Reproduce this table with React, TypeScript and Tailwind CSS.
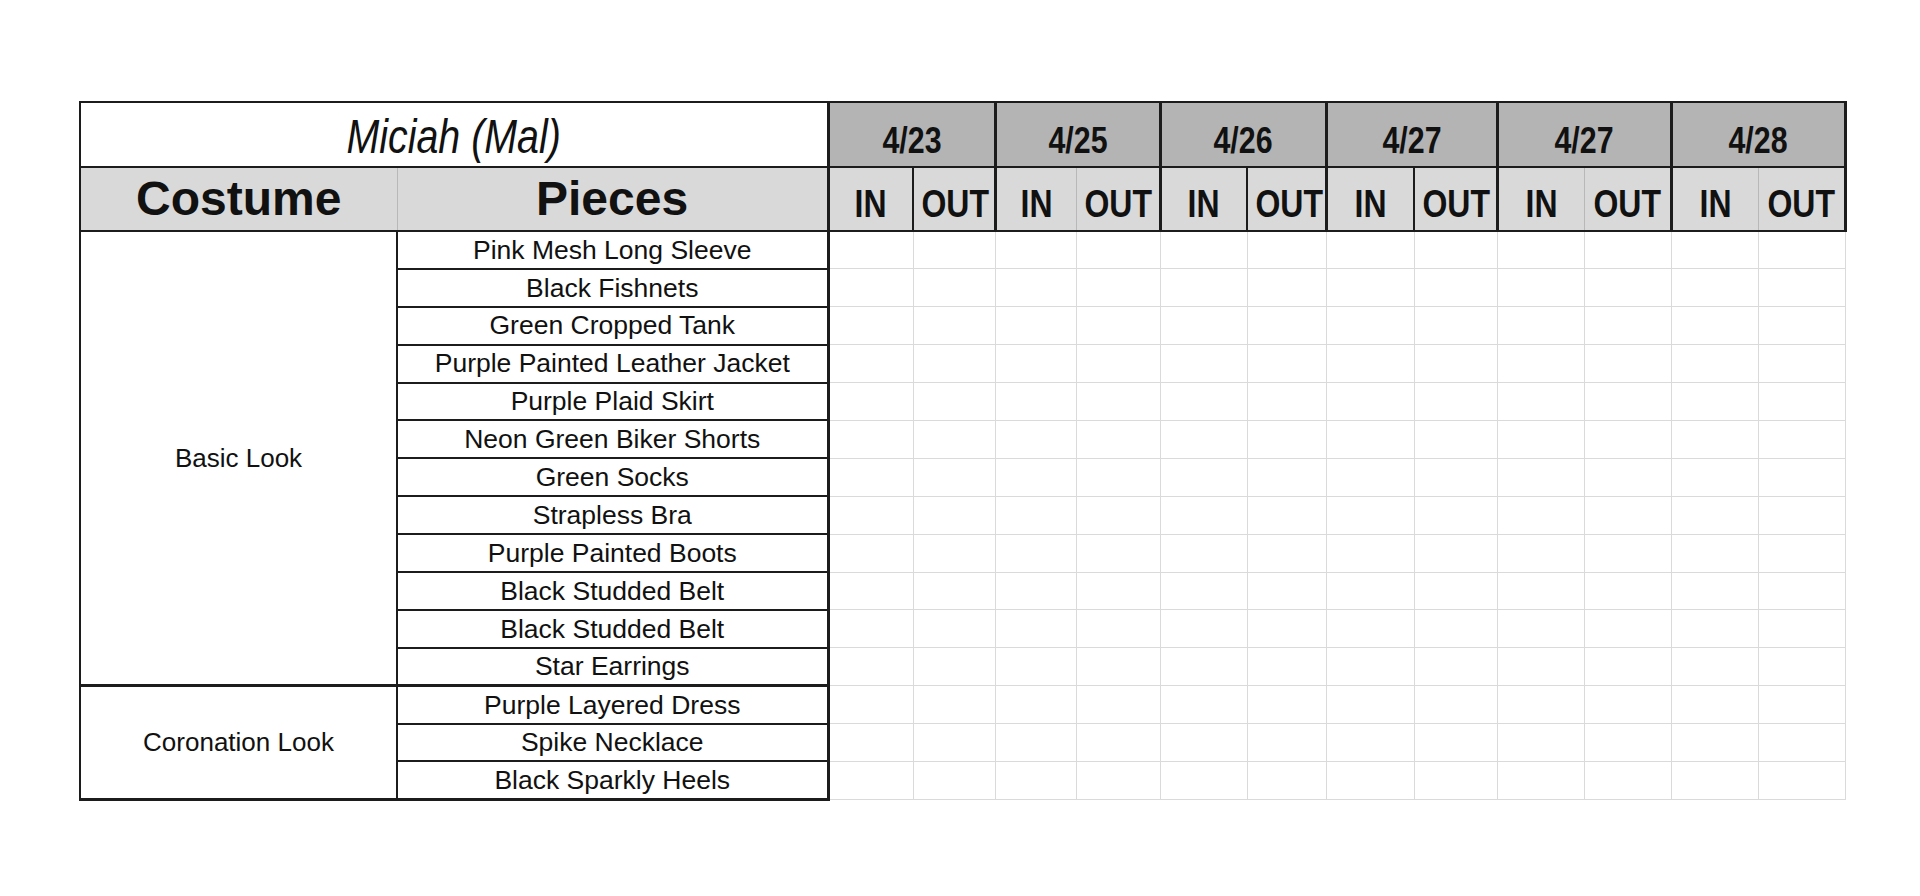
import { Fragment } from "react";

const dates = ["4/23", "4/25", "4/26", "4/27", "4/27", "4/28"];

// widths of IN / OUT columns, left to right
const dateCols = [85, 82, 81, 84, 87, 79, 88, 83, 87, 87, 87, 87];

// whether the IN|OUT divider in the header is drawn dark
const darkSplit = [true, false, true, true, false, false];

const looks = [
  {
    name: "Basic Look",
    pieces: [
      "Pink Mesh Long Sleeve",
      "Black Fishnets",
      "Green Cropped Tank",
      "Purple Painted Leather Jacket",
      "Purple Plaid Skirt",
      "Neon Green Biker Shorts",
      "Green Socks",
      "Strapless Bra",
      "Purple Painted Boots",
      "Black Studded Belt",
      "Black Studded Belt",
      "Star Earrings",
    ],
  },
  {
    name: "Coronation Look",
    pieces: ["Purple Layered Dress", "Spike Necklace", "Black Sparkly Heels"],
  },
];

// no narrow face installed, so squeeze the regular one
const Narrow = ({ children }: { children: React.ReactNode }) => (
  <span className="inline-block scale-x-[0.82] whitespace-nowrap">{children}</span>
);

const DataCells = () => (
  <>
    {dateCols.map((_, i) => (
      <td key={i} className="border-r-[1.5px] border-b-[1.5px] border-[#dadada]" />
    ))}
  </>
);

export default function App() {
  return (
    <div className="min-h-screen w-full bg-white pt-[101px] pl-[79px] font-['Liberation_Sans',Arial,sans-serif] text-[#111]">
      <table className="border-collapse table-fixed w-[1767px]">
        <colgroup>
          <col className="w-[317px]" />
          <col className="w-[431px]" />
          {dateCols.map((w, i) => (
            <col key={i} style={{ width: w }} />
          ))}
        </colgroup>
        <thead>
          <tr className="h-[65px]">
            <th colSpan={2} className="border-2 border-[#1c1c1c] bg-white pt-1 text-[48px] font-normal italic leading-none">
              <Narrow>Miciah (Mal)</Narrow>
            </th>
            {dates.map((d, i) => (
              <th
                key={i}
                colSpan={2}
                className="border-t-2 border-b-2 border-r-[3px] border-l-[3px] border-[#1c1c1c] bg-[#b4b4b4] pt-3 text-[37px] font-bold leading-none"
              >
                <Narrow>{d}</Narrow>
              </th>
            ))}
          </tr>
          <tr className="h-[64px]">
            <th className="border-l-2 border-b-2 border-r border-l-[#1c1c1c] border-b-[#1c1c1c] border-r-[#b8b8b8] bg-[#d9d9d9] text-[48px] font-bold leading-none">
              Costume
            </th>
            <th className="border-b-2 border-r-[3px] border-[#1c1c1c] bg-[#d9d9d9] text-[48px] font-bold leading-none">
              Pieces
            </th>
            {dates.map((_, i) => (
              <Fragment key={i}>
                <th
                  className={`border-b-2 border-b-[#1c1c1c] bg-[#d9d9d9] pt-2 text-[39px] font-bold leading-none ${
                    darkSplit[i] ? "border-r-2 border-r-[#1c1c1c]" : "border-r border-r-[#b8b8b8]"
                  }`}
                >
                  <Narrow>IN</Narrow>
                </th>
                <th className="border-b-2 border-r-[3px] border-[#1c1c1c] bg-[#d9d9d9] pt-2 text-[39px] font-bold leading-none">
                  <Narrow>OUT</Narrow>
                </th>
              </Fragment>
            ))}
          </tr>
        </thead>
        <tbody>
          {looks.map((look) =>
            look.pieces.map((piece, j) => (
              <tr key={look.name + j} className="h-[37.9px]">
                {j === 0 && (
                  <td
                    rowSpan={look.pieces.length}
                    className="border-l-2 border-b-[3px] border-r-2 border-[#1c1c1c] text-center align-middle text-[26px]"
                  >
                    {look.name}
                  </td>
                )}
                <td
                  className={`border-r-[3px] border-[#1c1c1c] p-0 text-center align-middle text-[26.5px] leading-none ${
                    j === look.pieces.length - 1 ? "border-b-[3px]" : "border-b-2"
                  }`}
                >
                  {piece}
                </td>
                <DataCells />
              </tr>
            ))
          )}
        </tbody>
      </table>
    </div>
  );
}
